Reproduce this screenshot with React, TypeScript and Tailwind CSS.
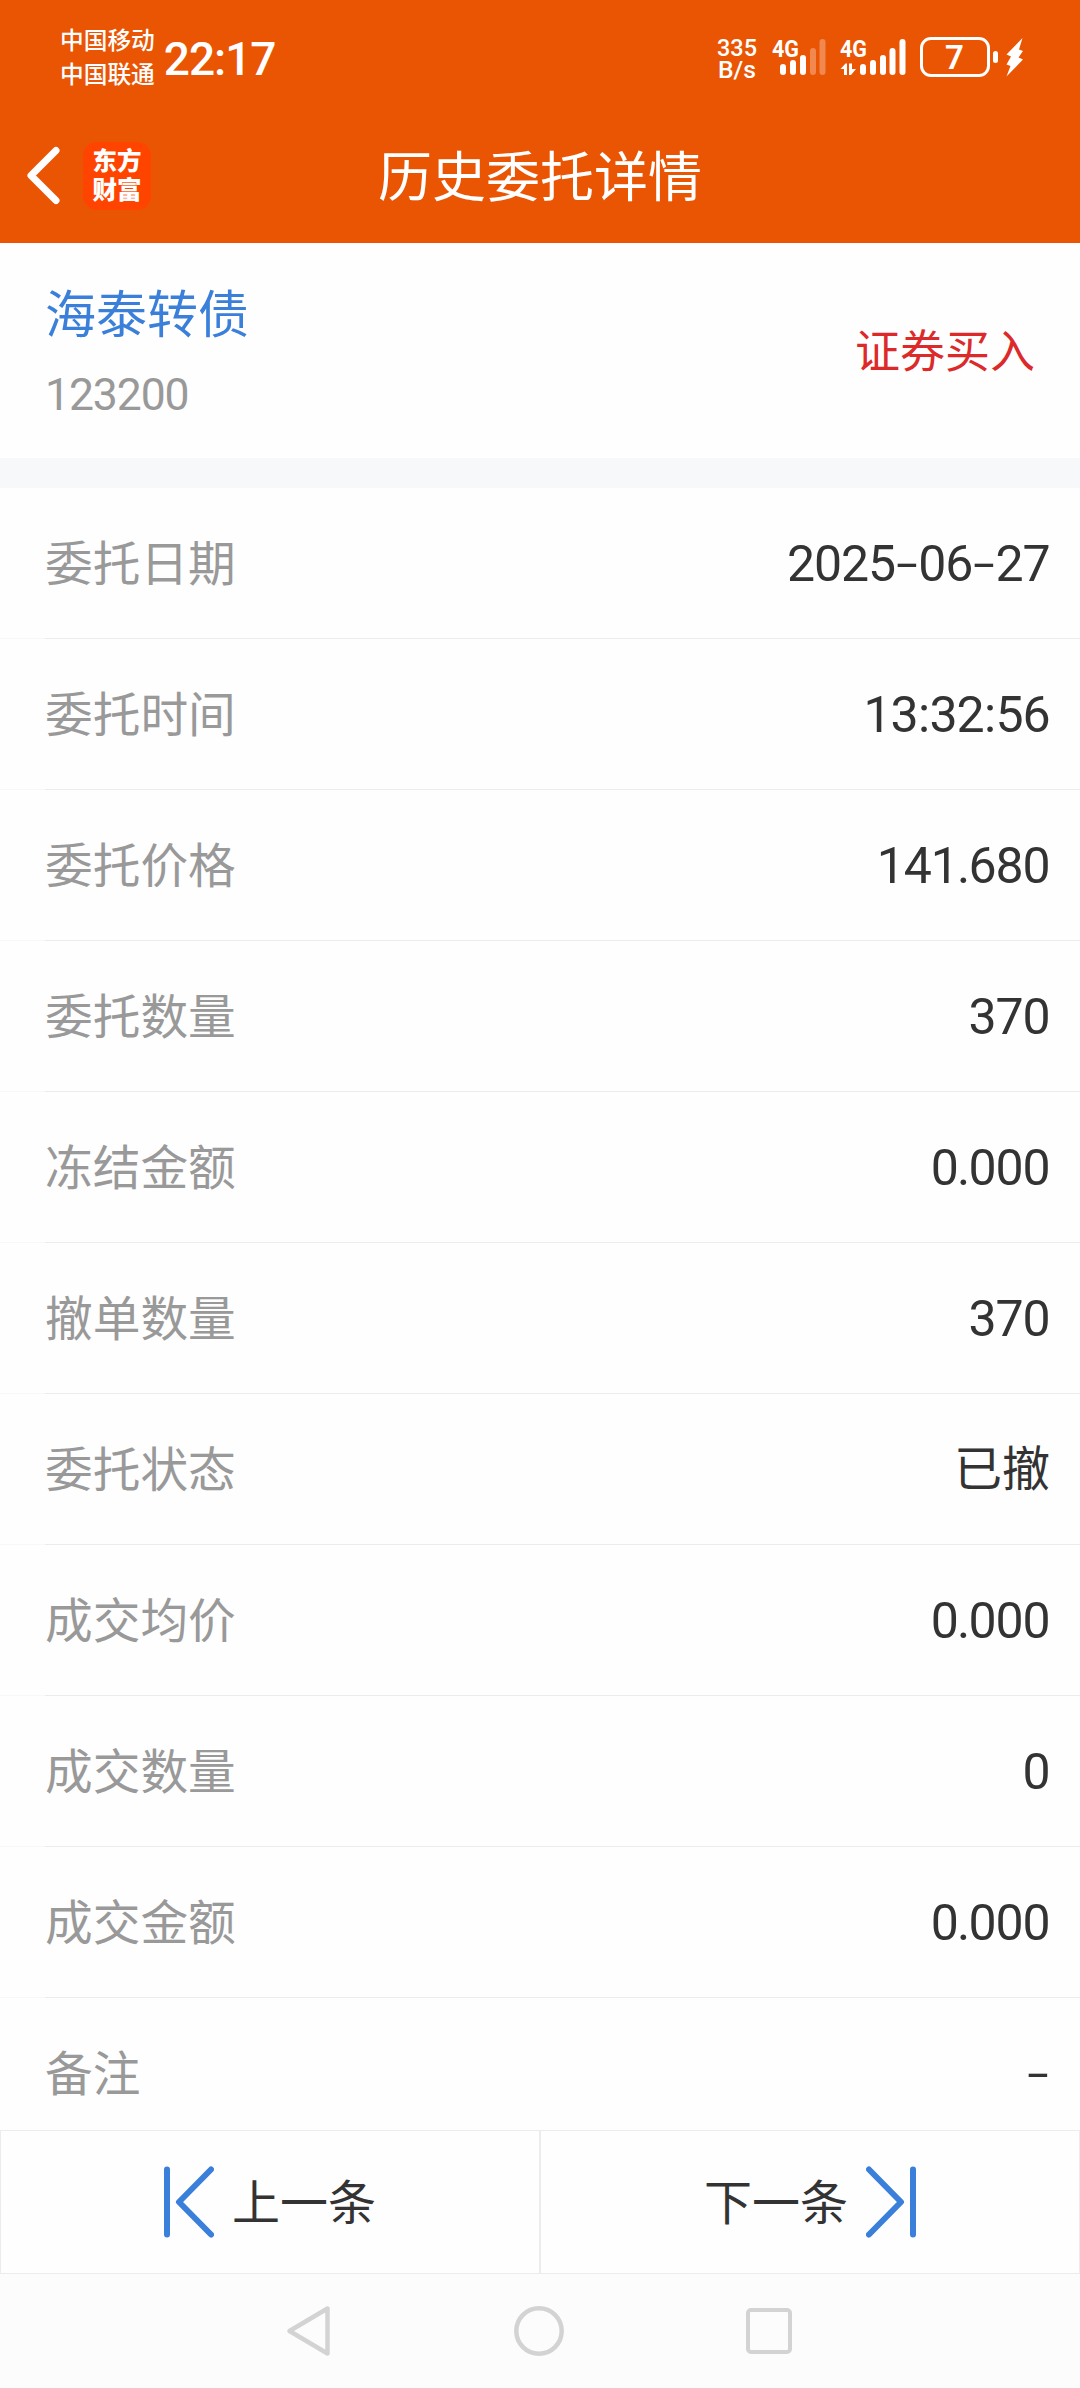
import React from 'react';

interface Field {
  label: string;
  value: string;
}

const fields: Field[] = [
  { label: '委托日期', value: '2025-06-27' },
  { label: '委托时间', value: '13:32:56' },
  { label: '委托价格', value: '141.680' },
  { label: '委托数量', value: '370' },
  { label: '冻结金额', value: '0.000' },
  { label: '撤单数量', value: '370' },
  { label: '委托状态', value: '已撤' },
  { label: '成交均价', value: '0.000' },
  { label: '成交数量', value: '0' },
  { label: '成交金额', value: '0.000' },
  { label: '备注', value: '-' },
];

const StatusIcons: React.FC = () => (
  <svg width="312" height="62" viewBox="714 28 312 62" fill="#fff" className="font-[Roboto]">
    <g fontSize="23.5" fontWeight="500">
      <text x="717" y="55.5" textLength="40" lengthAdjust="spacingAndGlyphs">335</text>
      <text x="718" y="78" textLength="38" lengthAdjust="spacingAndGlyphs">B/s</text>
    </g>
    <g fontSize="24" fontWeight="700">
      <text x="772" y="56.5" textLength="27" lengthAdjust="spacingAndGlyphs">4G</text>
      <text x="840" y="56.5" textLength="27" lengthAdjust="spacingAndGlyphs">4G</text>
    </g>
    {/* SIM 1 */}
    <rect x="780" y="64" width="6" height="11" rx="3" />
    <rect x="790" y="60" width="6" height="15" rx="3" />
    <rect x="800" y="55" width="6" height="20" rx="3" />
    <rect x="810" y="48" width="6" height="27" rx="3" opacity="0.3" />
    <rect x="819.5" y="39" width="6" height="36" rx="3" opacity="0.3" />
    {/* SIM 2 */}
    <path d="M840.5 69L845.5 63.5H847V75H844V69ZM856 69L851 75H849V63.5H852V69Z" />
    <rect x="860" y="64" width="6" height="11" rx="3" />
    <rect x="870" y="60" width="6" height="15" rx="3" />
    <rect x="880" y="55" width="6" height="20" rx="3" />
    <rect x="889.5" y="48" width="6" height="27" rx="3" />
    <rect x="899.5" y="39" width="6" height="36" rx="3" />
    {/* battery */}
    <rect x="921.5" y="38.5" width="67" height="37" rx="9.5" fill="none" stroke="#fff" strokeWidth="3" />
    <text x="954.5" y="68.5" fontSize="33" fontWeight="600" textAnchor="middle">7</text>
    <rect x="993" y="51" width="5" height="12" rx="2.5" />
    <path d="M1022.5 38L1006.5 54.5L1011 56.5L1006.5 64.5L1010.5 66L1006.5 76.5L1023 59.5L1018.5 57.5L1023 51L1019 49.5Z" />
  </svg>
);

const Header: React.FC = () => (
  <header className="h-[243px] bg-[#ea5504] text-white">
    <div className="flex h-[104px] items-start justify-between pt-[22px] pr-[54px] pl-[60px]">
      <div className="flex items-start">
        <div className="text-[23.7px] leading-[34px] font-medium">
          <p>中国移动</p>
          <p>中国联通</p>
        </div>
        <span className="ml-[9px] pt-[2px] font-[Roboto] text-[46px] leading-[70px] font-medium tracking-[-1px]">22:17</span>
      </div>
      <div className="pt-[6px]">
        <StatusIcons />
      </div>
    </div>
    <div className="grid h-[139px] grid-cols-[1fr_auto_1fr] items-center">
      <div className="flex items-center pl-[25px]">
        <svg width="36" height="60" viewBox="0 0 36 60" fill="none" stroke="#fff" strokeWidth="7" className="mt-[3px]">
          <path d="M31 5.5L6 30.5L31 55.5" strokeLinecap="round" strokeLinejoin="round" />
        </svg>
        <div className="mt-[4px] ml-[22px] flex h-[68px] w-[68px] flex-col items-center justify-center rounded-[14px] bg-[#ff4400] pb-[4px] text-[24.5px] leading-[29px] font-black">
          <span>东方</span>
          <span>财富</span>
        </div>
      </div>
      <h1 className="text-[54px] leading-[70px]">历史委托详情</h1>
    </div>
  </header>
);

// Hyphens are stretched to the width of a short dash
const FieldValue: React.FC<{ value: string }> = ({ value }) => (
  <span className="flex pt-[2px] font-[Roboto,'Noto_Sans_CJK_SC',sans-serif] text-[50px] leading-[60px] text-[#333]">
    {value.split('').map((char, index) => {
      if (char === '-') {
        return (
          <span key={index} className="flex w-[23.2px] justify-center">
            <span className="inline-block origin-center scale-x-[1.55] scale-y-90">-</span>
          </span>
        );
      }
      if (char === '.') {
        return (
          <span key={index} className="flex w-[10.8px] justify-center">{char}</span>
        );
      }
      if (char === ':') {
        return (
          <span key={index} className="flex w-[12px] justify-center">{char}</span>
        );
      }
      if (/\d/.test(char)) {
        return (
          <span key={index} className="flex w-[27px] justify-center">{char}</span>
        );
      }
      return <span key={index} className="text-[48px]">{char}</span>;
    })}
  </span>
);

const FieldRow: React.FC<Field> = ({ label, value }) => (
  <div className="h-[151px] shrink-0">
    <div className="flex h-[150px] items-center justify-between pr-[30px] pl-[45px]">
      <span className="pb-[4px] text-[47.7px] leading-[60px] text-[#999]">{label}</span>
      <FieldValue value={value} />
    </div>
    <div className="flex h-px">
      <div className="w-[45px] bg-[#f8f8f8]" />
      <div className="flex-1 bg-[#ececec]" />
    </div>
  </div>
);

const PagerIcon: React.FC<{ className?: string }> = ({ className }) => (
  <svg width="50" height="72" viewBox="0 0 50 72" fill="none" stroke="#3a7fd9" strokeWidth="6" className={className}>
    <path d="M3 3.5V68.5M47 3.5L15 36L47 68.5" strokeLinecap="round" strokeLinejoin="round" />
  </svg>
);

const App: React.FC = () => {
  return (
    <div className="flex h-[2388px] w-[1080px] flex-col overflow-hidden bg-[#fefefe] font-['Noto_Sans_CJK_SC',sans-serif]">
      <Header />

      <section className="flex h-[215px] items-center justify-between px-[45px]">
        <div className="flex flex-col">
          <span className="text-[51px] leading-[68px] text-[#3a7fd9]">海泰转债</span>
          <span className="mt-[20px] font-[Roboto] text-[44.5px] leading-[60px] tracking-[-1.1px] text-[#999]">123200</span>
        </div>
        <span className="pb-[3px] text-[45px] leading-[60px] text-[#dc2a2a]">证券买入</span>
      </section>
      <div className="h-[30px] bg-[#f7f8fa]" />

      <main className="flex h-[1642px] flex-col overflow-hidden">
        {fields.map((field) => (
          <FieldRow key={field.label} {...field} />
        ))}
      </main>

      <div className="grid h-[144px] grid-cols-2 text-[48px] leading-[60px] text-[#333]">
        <button className="flex items-center justify-center gap-[18px] border border-[#ececec]">
          <PagerIcon />
          <span className="pb-[6px]">上一条</span>
        </button>
        <button className="flex items-center justify-center gap-[18px] border border-[#ececec]">
          <span className="pb-[6px]">下一条</span>
          <PagerIcon className="-scale-x-100" />
        </button>
      </div>

      <nav className="flex h-[114px] items-center justify-between bg-[#fcfcfc] pr-[288px] pl-[286px]">
        <svg width="46" height="52" viewBox="0 0 46 52" fill="none" stroke="#d3d3d3" strokeWidth="4.5" strokeLinejoin="round">
          <path d="M41.5 3.5V48.5L3.5 26Z" />
        </svg>
        <svg width="50" height="50" viewBox="0 0 50 50" fill="none" stroke="#d3d3d3" strokeWidth="4.5">
          <circle cx="25" cy="25" r="22.7" />
        </svg>
        <div className="h-[46px] w-[46px] rounded-[5px] border-[4.5px] border-[#d3d3d3]" />
      </nav>
    </div>
  );
};

export default App;
